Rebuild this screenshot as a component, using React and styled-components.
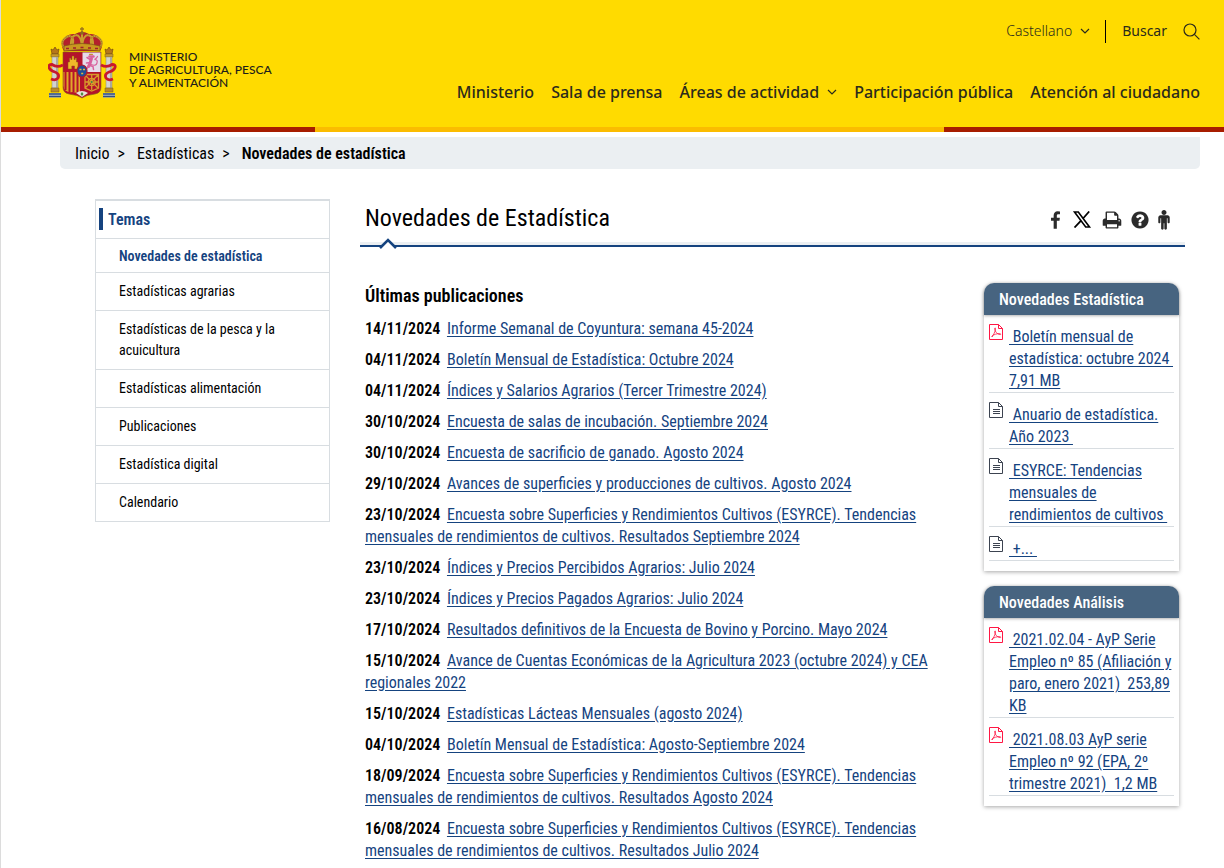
import React from 'react';
import styled, { createGlobalStyle } from 'styled-components';

const colors = {
  yellow: '#ffdb00',
  amber: '#fbbc00',
  red: '#a71d00',
  blue: '#15437f',
  steel: '#476480',
  line: '#d8dde1',
  pale: '#ebeff2',
  ink: '#2a2a1c',
};

const condensed = "'Roboto Condensed', 'Liberation Sans Narrow', Roboto, sans-serif";

const GlobalStyle = createGlobalStyle`
  * {
    box-sizing: border-box;
  }
  body {
    margin: 0;
    background: #fff;
    color: #000;
    font: 16px/22px ${condensed};
  }
  ul, h1, h2, h3, p {
    margin: 0;
    padding: 0;
    font-size: inherit;
    font-weight: inherit;
  }
  strong {
    font-weight: 600;
  }
  ul {
    list-style: none;
  }
  a {
    color: inherit;
  }
`;

const Page = styled.div`
  border-left: 1px solid #dcdcdc;
  height: 100vh;
  overflow: hidden;
`;

const Header = styled.header`
  display: flex;
  justify-content: space-between;
  height: 127px;
  padding: 0 24px 0 47px;
  background: ${colors.yellow};
  color: ${colors.ink};
  font-family: 'Noto Sans', 'Open Sans', sans-serif;
`;

const Brand = styled.a`
  display: flex;
  align-self: flex-start;
  align-items: center;
  gap: 12px;
  padding-top: 27px;
  color: #1d1d1b;
  font: 500 12px/13px Lato, sans-serif;
  text-decoration: none;
`;

const BrandName = styled.span`
  padding-top: 13px;
`;

const HeaderSide = styled.div`
  display: flex;
  flex-direction: column;
  align-items: flex-end;
  gap: 37px;
  padding-top: 19px;
`;

const Tools = styled.div`
  display: flex;
  align-items: center;
  height: 24px;
  font-size: 14px;
`;

const ToolButton = styled.button`
  display: flex;
  align-items: center;
  gap: ${({ $gap }) => $gap};
  padding: 0;
  border: 0;
  background: none;
  color: inherit;
  font: inherit;
  font-weight: ${({ $light }) => ($light ? 300 : 400)};
  cursor: pointer;
`;

const Separator = styled.span`
  width: 1px;
  height: 23px;
  margin: 0 16px 0 15px;
  background: #000;
`;

const MainNav = styled.nav`
  display: flex;
  gap: 17px;
  font-size: 16px;
  line-height: 24px;
  font-weight: 500;
`;

const NavLink = styled.a`
  display: flex;
  align-items: center;
  gap: 8px;
  text-decoration: none;
  white-space: nowrap;
`;

const Stripe = styled.div`
  display: grid;
  grid-template-columns: 314fr 629fr 280fr;
  height: 5px;
  background: ${colors.red};

  span {
    grid-column: 2;
    background: ${colors.amber};
  }
`;

const Breadcrumb = styled.nav`
  display: flex;
  gap: 8px;
  margin: 5px 24px 0 59px;
  padding: 6px 15px 4px;
  border-radius: 0 0 5px 5px;
  background: ${colors.pale};

  a {
    text-decoration: none;
  }
  span {
    margin-right: 4px;
  }
`;

const Columns = styled.div`
  display: grid;
  grid-template-columns: 235px minmax(0, 1fr);
  gap: 30px;
  align-items: start;
  padding: 30px 39px 0 94px;
`;

const Sidebar = styled.nav`
  border: 1px solid ${colors.line};
  border-top-width: 2px;
  font-size: 14px;
  line-height: 21px;
`;

const SidebarTitle = styled.h2`
  padding: 7px 3px 8px;
  color: ${colors.blue};
  font-size: 16px;
  font-weight: 600;
  line-height: 22px;

  span {
    display: block;
    padding: 1px 0 0 5px;
    border-left: 4px solid ${colors.blue};
    line-height: 21px;
  }
`;

const SidebarItem = styled.li`
  padding: ${({ $active }) => ($active ? '7px 40px 5px 23px' : '8px 40px 8px 23px')};
  border-top: 1px solid ${colors.line};
  color: ${({ $active }) => ($active ? colors.blue : '#000')};
  font-weight: ${({ $active }) => ($active ? 600 : 400)};

  a {
    text-decoration: none;
  }
`;

const TitleBar = styled.div`
  display: flex;
  justify-content: space-between;
  height: 43px;
  padding: 5px 15px 0 5px;
`;

const Title = styled.h1`
  font-size: 24px;
  line-height: 28px;
`;

const Share = styled.div`
  display: flex;
  align-items: center;
  height: 31px;
  gap: 8px;
  color: #2b2b2b;

  a {
    display: flex;
  }
`;

const TitleRule = styled.div`
  height: 5px;
  border-top: 3px solid ${colors.pale};
  border-bottom: 2px solid ${colors.blue};

  svg {
    display: block;
    position: relative;
    top: -8px;
    margin-left: 19px;
  }
`;

const Content = styled.div`
  display: grid;
  grid-template-columns: minmax(0, 1fr) 195px;
  gap: 48px;
  align-items: start;
  padding: 36px 6px 0 5px;
`;

const Heading = styled.h2`
  margin-bottom: 11px;
  padding-top: 2px;
  font-size: 18px;
  font-weight: 600;
`;

const Publications = styled.ul`
  display: flex;
  flex-direction: column;
  gap: 9px;

  a {
    color: ${colors.blue};
    text-underline-offset: 2px;
  }
  strong {
    margin-right: 3px;
  }
`;

const Aside = styled.aside`
  display: flex;
  flex-direction: column;
  gap: 15px;
`;

const Panel = styled.section`
  padding-bottom: 10px;
  border-radius: 10px 10px 0 0;
  box-shadow: 0 1px 4px rgba(0, 0, 0, 0.35);
`;

const PanelTitle = styled.h2`
  padding: 6px 15px 4px;
  border-radius: 10px 10px 0 0;
  background: ${colors.steel};
  box-shadow: 0 1px 3px rgba(0, 0, 0, 0.3);
  color: #fff;
  font-weight: 500;
`;

const PanelItem = styled.li`
  display: flex;
  gap: 6px;
  margin: 0 5px;
  padding: 11px 0 0;
  border-bottom: 1px solid ${colors.line};

  svg {
    flex: none;
    margin-top: -2px;
  }
  a {
    margin-right: -2px;
    color: ${colors.blue};
    text-underline-offset: 2px;
  }
`;

const Chevron = () => (
  <svg width="10" height="6" viewBox="0 0 10 6" fill="none" stroke="currentColor" strokeWidth="1.2">
    <path d="M1 1l4 4 4-4" />
  </svg>
);

const SearchIcon = () => (
  <svg width="17" height="17" viewBox="0 0 17 17" fill="none" stroke="currentColor" strokeWidth="1.2">
    <circle cx="7" cy="7" r="6" />
    <path d="M11.400 11.400l5 5" />
  </svg>
);

const PdfIcon = () => (
  <svg width="14" height="16" viewBox="0 0 14 16" fill="none" stroke="#ff1744" strokeWidth="1">
    <path d="M.5.500h9l4 4v11H.5z" />
    <path d="M9.500.500v4h4" />
    <path d="M3 13c1-2 3.500-5 3.500-8.500 0-1-1-1-.8.400C6.200 8 8 10 11 10.600c1 .2 1-1-.2-1C8 9.500 5 10.500 3 12z" strokeWidth=".8" />
  </svg>
);

const DocIcon = () => (
  <svg width="14" height="16" viewBox="0 0 14 16" fill="none" stroke="#3c4350" strokeWidth="1">
    <path d="M.5.500h9l4 4v11H.5z" />
    <path d="M9.500.500v4h4M4 7.500h7M4 9.500h7M4 11.500h7" />
  </svg>
);

const glyphs = {
  facebook: 'M1343 12v264h-157q-86 0-116 36t-30 108v189h293l-39 296h-254v759h-306v-759h-255v-296h255v-218q0-186 104-288.500t277-102.500q147 0 228 12z',
  print: 'M448 1536h896v-256h-896v256zm0-640h896v-384h-160q-40 0-68-28t-28-68v-160h-640v640zm1152 64q0-26-19-45t-45-19-45 19-19 45 19 45 45 19 45-19 19-45zm128 0v416q0 13-9.500 22.500t-22.500 9.500h-224v160q0 40-28 68t-68 28h-960q-40 0-68-28t-28-68v-160h-224q-13 0-22.500-9.500t-9.500-22.500v-416q0-79 56.500-135.500t135.500-56.500h64v-544q0-40 28-68t68-28h672q40 0 88 20t76 48l152 152q28 28 48 76t20 88v256h64q79 0 135.500 56.500t56.500 135.500z',
  help: 'M1024 1376v-192q0-14-9-23t-23-9h-192q-14 0-23 9t-9 23v192q0 14 9 23t23 9h192q14 0 23-9t9-23zm256-672q0-88-55.500-163t-138.500-116-170-41q-243 0-371 213-15 24 8 42l132 100q7 6 19 6 16 0 25-12 53-68 86-92 34-24 86-24 48 0 85.500 26t37.500 59q0 38-20 61t-68 45q-63 28-115.500 86.500t-52.500 125.500v36q0 14 9 23t23 9h192q14 0 23-9t9-23q0-19 21.500-49.500t54.500-49.500q32-18 49-28.500t46-35 44.500-48 28-60.500 12.500-81zm384 192q0 209-103 385.500t-279.500 279.500-385.500 103-385.500-103-279.500-279.500-103-385.500 103-385.500 279.500-279.500 385.500-103 385.500 103 279.500 279.500 103 385.500z',
  person: 'M1408 672v416q0 40-28 68t-68 28-68-28-28-68v-352h-64v912q0 46-33 79t-79 33-79-33-33-79v-464h-64v464q0 46-33 79t-79 33-79-33-33-79v-912h-64v352q0 40-28 68t-68 28-68-28-28-68v-416q0-80 56-136t136-56h640q80 0 136 56t56 136zm-288-448q0 93-65.500 158.500t-158.500 65.500-158.500-65.500-65.500-158.500 65.500-158.500 158.500-65.500 158.500 65.500 65.500 158.500z',
};

const Glyph = ({ name, width, box }) => (
  <svg width={width} height="20" viewBox={box} fill="currentColor">
    <path d={glyphs[name]} />
  </svg>
);

const XIcon = () => (
  <svg width="24" height="17" viewBox="-3 0 24 17" fill="none" stroke="#000">
    <path d="M1.500 1h3.800l11.200 15h-3.800z" strokeWidth="1.600" />
    <path d="M16.200.500L10 7.500M7.800 9.800L1.500 16.500" strokeWidth="1.800" />
  </svg>
);

const Pillar = ({ x }) => (
  <g transform={`translate(${x} 20)`}>
    <path d="M1 2l2 1 2-3 2 3 2-1-1 5H2z" fill="#b5771a" stroke="#6b3f10" strokeWidth=".6" />
    <path d="M1 7h8v3H1z" fill="#c99a2b" stroke="#755a1a" strokeWidth=".5" />
    <path d="M2 10h6v31H2z" fill="#d3d3d0" stroke="#8b8870" strokeWidth=".5" />
    <path d="M6 10h2v31H6z" fill="#aaa99f" />
    <path d="M1 41h8v4H1z" fill="#b98a28" stroke="#755a1a" strokeWidth=".5" />
    <path d="M-1 46h12v4.500H-1z" fill="#b9c0c8" />
    <path d="M-1 47h12M-1 49.500h12" fill="none" stroke="#33507f" strokeWidth="1.300" />
  </g>
);

const Crest = () => (
  <svg width="69" height="72" viewBox="0 0 69 72" role="img" aria-label="Escudo de España">
    <Pillar x={2} />
    <Pillar x={56} />
    <path d="M16 24q-4-6-1-11 4-7 12-6 7-4 14 0 8-1 12 6 3 5-1 11z" fill="#b3202b" />
    <path d="M17 22q-5-6-1-10 6-6 9 0 1 5-2 9M23 21q-1-12 5-13 5 0 6 12M51 22q5-6 1-10-6-6-9 0-1 5 2 9M45 21q1-12-5-13-5 0-6 12M34 4v16" fill="none" stroke="#c79d2f" strokeWidth="2" />
    <path d="M17 22q-5-6-1-10 6-6 9 0M51 22q5-6 1-10-6-6-9 0M27 8q7-5 14 0" fill="none" stroke="#6f4d17" strokeWidth=".6" strokeDasharray="1 1" />
    <path d="M34 0v5M32 2h4" stroke="#9c741c" strokeWidth="1.300" />
    <circle cx="34" cy="6" r="1.800" fill="#8a6a22" />
    <path d="M16 19q18-5 36 0v5q-18-3-36 0z" fill="#c9971f" stroke="#7c5514" strokeWidth=".7" />
    <path d="M18 21.500h3M25 21h3M32.500 20.500h3M40 21h3M47 21.500h3" stroke="#a01f2c" strokeWidth="1.600" />
    <path d="M15 25h38v35q0 6-6 7-9 1-13 4-4-3-13-4-6-1-6-7z" fill="#b5122b" stroke="#81621d" strokeWidth=".6" />
    <path d="M34.500 25.500h18V45h-18z" fill="#e6dcea" />
    <path d="M15.500 45H34v22l-9-2q-9 1-9.500-6z" fill="#e0a62b" />
    <path d="M17.500 45v18M21.500 45v20M25.500 45v20M29.500 45v21M33 45v21" stroke="#b5122b" strokeWidth="2" />
    <path d="M20 42V35h1.500v-4h1.300v1.500h1.200V29h2v3.500h1.200V31h1.300v4H30v7h-3.500v-3h-2.700v3z" fill="#f0b929" stroke="#8c5715" strokeWidth=".5" />
    <g fill="none" stroke="#d9609c" strokeLinecap="round">
      <path d="M43.500 31.500l-1.500 5-1.500 3" strokeWidth="3" />
      <path d="M43 33l-4-2.500M42.500 35.500l-4 .5M41 39l-2.500 3M42 38.500l3 1 .5 3" strokeWidth="1.500" />
      <path d="M43 37.500q5 2 6-1.500t-2.500-3.500q2-1 3-3" strokeWidth="1.200" />
      <path d="M41.500 29.500h4" strokeWidth="2.400" />
      <path d="M41.500 27.300h3" stroke="#c68d34" strokeWidth="1.200" />
    </g>
    <g fill="none" stroke="#d89b2b" strokeWidth="1.300">
      <path d="M37 47.500h13.500V61L43.700 64 37 61zM37 48l13 13M50 48L37 61M43.700 48v15M37 55h13.500" />
      <circle cx="43.700" cy="55" r="3.600" />
    </g>
    <circle cx="43.700" cy="55" r="1" fill="#3f8a46" />
    <ellipse cx="34" cy="44" rx="5" ry="6" fill="#1f4c98" stroke="#a81c30" strokeWidth="1.200" />
    <path d="M31.500 42.500h2M35 42.500h2M33.200 46.500h2" stroke="#e3b83b" strokeWidth="1.600" />
    <path d="M28 66q6-4 12 0l-6 4z" fill="#e7e2dc" />
    <path d="M32.500 67l1.500-2 1.500 2-1.500 2z" fill="#4c8a3f" />
    <g fill="none" stroke="#c8182d" strokeWidth="2.800">
      <path d="M15 38q-6 3-11-.5-4 0-3 3 1 3 6 4.500 5 2 3 6-2 3-7 1" />
      <path d="M53 38q6 3 11-.5 4 0 3 3-1 3-6 4.500-5 2-3 6 2 3 7 1" />
    </g>
  </svg>
);

const navLinks = [
  { text: 'Ministerio' },
  { text: 'Sala de prensa' },
  { text: 'Áreas de actividad', menu: true },
  { text: 'Participación pública' },
  { text: 'Atención al ciudadano' },
];

const topics = [
  'Novedades de estadística',
  'Estadísticas agrarias',
  'Estadísticas de la pesca y la acuicultura',
  'Estadísticas alimentación',
  'Publicaciones',
  'Estadística digital',
  'Calendario',
];

const publications = [
  ['14/11/2024', 'Informe Semanal de Coyuntura: semana 45-2024'],
  ['04/11/2024', 'Boletín Mensual de Estadística: Octubre 2024'],
  ['04/11/2024', 'Índices y Salarios Agrarios (Tercer Trimestre 2024)'],
  ['30/10/2024', 'Encuesta de salas de incubación. Septiembre 2024'],
  ['30/10/2024', 'Encuesta de sacrificio de ganado. Agosto 2024'],
  ['29/10/2024', 'Avances de superficies y producciones de cultivos. Agosto 2024'],
  ['23/10/2024', 'Encuesta sobre Superficies y Rendimientos Cultivos (ESYRCE). Tendencias mensuales de rendimientos de cultivos. Resultados Septiembre 2024'],
  ['23/10/2024', 'Índices y Precios Percibidos Agrarios: Julio 2024'],
  ['23/10/2024', 'Índices y Precios Pagados Agrarios: Julio 2024'],
  ['17/10/2024', 'Resultados definitivos de la Encuesta de Bovino y Porcino. Mayo 2024'],
  ['15/10/2024', 'Avance de Cuentas Económicas de la Agricultura 2023 (octubre 2024) y CEA regionales 2022'],
  ['15/10/2024', 'Estadísticas Lácteas Mensuales (agosto 2024)'],
  ['04/10/2024', 'Boletín Mensual de Estadística: Agosto-Septiembre 2024'],
  ['18/09/2024', 'Encuesta sobre Superficies y Rendimientos Cultivos (ESYRCE). Tendencias mensuales de rendimientos de cultivos. Resultados Agosto 2024'],
  ['16/08/2024', 'Encuesta sobre Superficies y Rendimientos Cultivos (ESYRCE). Tendencias mensuales de rendimientos de cultivos. Resultados Julio 2024'],
];

const panels = [
  {
    title: 'Novedades Estadística',
    items: [
      { pdf: true, text: '\u00a0Boletín mensual de estadística: octubre 2024\u00a0 7,91 MB' },
      { text: '\u00a0Anuario de estadística. Año 2023\u00a0' },
      { text: '\u00a0ESYRCE: Tendencias mensuales de rendimientos de cultivos\u00a0' },
      { text: '\u00a0+...\u00a0' },
    ],
  },
  {
    title: 'Novedades Análisis',
    items: [
      { pdf: true, text: '\u00a02021.02.04 - AyP Serie Empleo nº 85 (Afiliación y paro, enero 2021)\u00a0 253,89 KB' },
      { pdf: true, text: '\u00a02021.08.03 AyP serie Empleo nº 92 (EPA, 2º trimestre 2021)\u00a0 1,2 MB' },
    ],
  },
];

const App = () => (
  <Page>
    <GlobalStyle />
    <Header>
      <Brand href="#">
        <Crest />
        <BrandName>
          MINISTERIO
          <br />
          DE AGRICULTURA, PESCA
          <br />
          Y ALIMENTACIÓN
        </BrandName>
      </Brand>
      <HeaderSide>
        <Tools>
          <ToolButton type="button" $gap="8px" $light>
            Castellano
            <Chevron />
          </ToolButton>
          <Separator />
          <ToolButton type="button" $gap="16px">
            Buscar
            <SearchIcon />
          </ToolButton>
        </Tools>
        <MainNav>
          {navLinks.map(({ text, menu }) => (
            <NavLink href="#" key={text}>
              {text}
              {menu && <Chevron />}
            </NavLink>
          ))}
        </MainNav>
      </HeaderSide>
    </Header>
    <Stripe><span /></Stripe>
    <Breadcrumb>
      <a href="#">Inicio</a>
      <span>&gt;</span>
      <a href="#">Estadísticas</a>
      <span>&gt;</span>
      <strong>Novedades de estadística</strong>
    </Breadcrumb>
    <Columns>
      <Sidebar>
        <SidebarTitle><span>Temas</span></SidebarTitle>
        <ul>
          {topics.map((topic, i) => (
            <SidebarItem key={topic} $active={i === 0}>
              <a href="#">{topic}</a>
            </SidebarItem>
          ))}
        </ul>
      </Sidebar>
      <main>
        <TitleBar>
          <Title>Novedades de Estadística</Title>
          <Share>
            <a href="#" aria-label="Facebook"><Glyph name="facebook" width="12" box="480 -128 960 1920" /></a>
            <a href="#" aria-label="X"><XIcon /></a>
            <a href="#" aria-label="Imprimir"><Glyph name="print" width="20" box="0 0 1792 1792" /></a>
            <a href="#" aria-label="Ayuda"><Glyph name="help" width="20" box="0 0 1792 1792" /></a>
            <a href="#" aria-label="Accesibilidad"><Glyph name="person" width="12" box="384 0 1024 1792" /></a>
          </Share>
        </TitleBar>
        <TitleRule>
          <svg width="18" height="12" viewBox="0 0 18 12">
            <path d="M2 10l7-7 7 7v1H2z" fill="#fff" />
            <path d="M1 11l8-8 8 8" fill="none" stroke={colors.blue} strokeWidth="2.500" />
          </svg>
        </TitleRule>
        <Content>
          <section>
            <Heading>Últimas publicaciones</Heading>
            <Publications>
              {publications.map(([date, text]) => (
                <li key={date + text}>
                  <strong>{date}</strong>
                  {' '}
                  <a href="#">{text}</a>
                </li>
              ))}
            </Publications>
          </section>
          <Aside>
            {panels.map(({ title, items }) => (
              <Panel key={title}>
                <PanelTitle>{title}</PanelTitle>
                <ul>
                  {items.map(({ pdf, text }) => (
                    <PanelItem key={text}>
                      {pdf ? <PdfIcon /> : <DocIcon />}
                      <a href="#">{text}</a>
                    </PanelItem>
                  ))}
                </ul>
              </Panel>
            ))}
          </Aside>
        </Content>
      </main>
    </Columns>
  </Page>
);

export default App;
